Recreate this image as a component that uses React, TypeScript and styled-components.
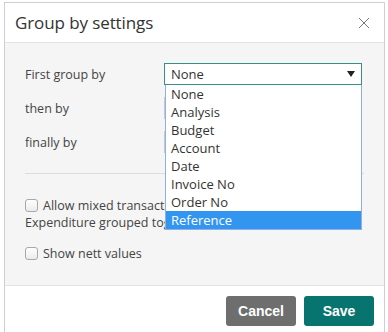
import * as React from "react";
import styled, { createGlobalStyle } from "styled-components";

const Global = createGlobalStyle`
  html, body {
    margin: 0;
    padding: 0;
    background: #ffffff;
  }
  body {
    font-family: "Open Sans", "Noto Sans", sans-serif;
    color: #333;
  }
`;

const options = ["None", "Analysis", "Budget", "Account", "Date", "Invoice No", "Order No", "Reference"];

export default function App() {
  return (
    <Page>
      <Global />
      <Modal>
        <Header>
          <Title>Group by settings</Title>
          <Close>
            <svg width="12" height="12" viewBox="0 0 12 12">
              <path d="M1 1 L11 11 M11 1 L1 11" stroke="#777" strokeWidth="1" fill="none" />
            </svg>
          </Close>
        </Header>
        <Body>
          <Grid>
            <Label>First group by</Label>
            <SelectWrap>
              <Select $focused>
                <span>None</span>
                <Caret>
                  <svg width="8" height="6" viewBox="0 0 8 6">
                    <path d="M0 0 L8 0 L4 6 Z" fill="#222" />
                  </svg>
                </Caret>
              </Select>
              <List>
                {options.map(option => (
                  <Item key={option} $selected={option === "Reference"}>
                    {option}
                  </Item>
                ))}
              </List>
            </SelectWrap>
            <Label>then by</Label>
            <Select />
            <Label>finally by</Label>
            <Select />
          </Grid>
          <Rule />
          <Check>
            <Box />
            <span>Allow mixed transacti</span>
          </Check>
          <Note>Expenditure grouped tog</Note>
          <Check $spaced>
            <Box />
            <span>Show nett values</span>
          </Check>
        </Body>
        <Footer>
          <Button $kind="cancel">Cancel</Button>
          <Button $kind="save">Save</Button>
        </Footer>
      </Modal>
    </Page>
  );
}

const Page = styled.div`
  padding: 2px 0 0 4px;
  height: 330px;
  overflow: hidden;
`;

const Modal = styled.div`
  width: 379px;
  border: 1px solid #cfcfcf;
  border-bottom: none;
  background: #fff;
`;

const Header = styled.div`
  height: 39px;
  display: flex;
  align-items: center;
  justify-content: space-between;
  padding: 0 14px 0 10px;
  border-bottom: 1px solid #e3e3e3;
`;

const Title = styled.div`
  font-size: 17px;
  color: #333;
  letter-spacing: -0.1px;
  margin-top: -1px;
`;

const Close = styled.div`
  display: flex;
  align-items: center;
`;

const Body = styled.div`
  background: #f5f5f5;
  height: 243px;
  padding: 20px 20px 0 20px;
  box-sizing: border-box;
  border-bottom: 1px solid #e3e3e3;
  font-size: 12.5px;
`;

const Grid = styled.div`
  display: grid;
  grid-template-columns: 139px 198px;
  row-gap: 12px;
  align-items: center;
`;

const Label = styled.div`
  color: #444;
  font-size: 12.5px;
`;

const SelectWrap = styled.div`
  position: relative;
`;

const Select = styled.div<{ $focused?: boolean }>`
  height: 22px;
  box-sizing: border-box;
  border: 1px solid ${p => (p.$focused ? "#3a8e89" : "#c9c9c9")};
  background: #fff;
  display: flex;
  align-items: center;
  justify-content: space-between;
  padding: 0 6px 0 6px;
  font-size: 13px;
  color: #333;
`;

const Caret = styled.span`
  display: flex;
  align-items: center;
`;

const List = styled.div`
  position: absolute;
  top: 22px;
  left: 1px;
  right: 0;
  background: #fff;
  border: 1px solid #8fb0e6;
  border-top: none;
  z-index: 2;
`;

const Item = styled.div<{ $selected?: boolean }>`
  height: 18px;
  line-height: 18px;
  padding-left: 5px;
  font-size: 13px;
  color: ${p => (p.$selected ? "#fff" : "#333")};
  background: ${p => (p.$selected ? "#3296f0" : "transparent")};
`;

const Rule = styled.div`
  height: 1px;
  background: #dcdcdc;
  margin: 20px 0 22px 0;
`;

const Check = styled.div<{ $spaced?: boolean }>`
  display: flex;
  align-items: center;
  gap: 5px;
  height: 18px;
  margin-top: ${p => (p.$spaced ? "12px" : "0")};
  color: #444;
  font-size: 12.5px;
  white-space: nowrap;
`;

const Box = styled.span`
  width: 13px;
  height: 13px;
  flex: none;
  border: 1px solid #a8a8a8;
  border-radius: 3px;
  background: linear-gradient(#fdfdfd, #ececec);
  box-sizing: border-box;
`;

const Note = styled.div`
  height: 18px;
  line-height: 18px;
  color: #444;
  font-size: 12.5px;
  white-space: nowrap;
`;

const Footer = styled.div`
  display: flex;
  justify-content: flex-end;
  gap: 8px;
  padding: 10px 10px 0 0;
  height: 50px;
`;

const Button = styled.div<{ $kind: "cancel" | "save" }>`
  width: 70px;
  height: 30px;
  border-radius: 3px;
  display: flex;
  align-items: center;
  justify-content: center;
  font-family: "Liberation Sans", Arial, sans-serif;
  font-weight: bold;
  font-size: 14px;
  color: #fff;
  background: ${p => (p.$kind === "save" ? "#08746f" : "#6e6e6e")};
`;
